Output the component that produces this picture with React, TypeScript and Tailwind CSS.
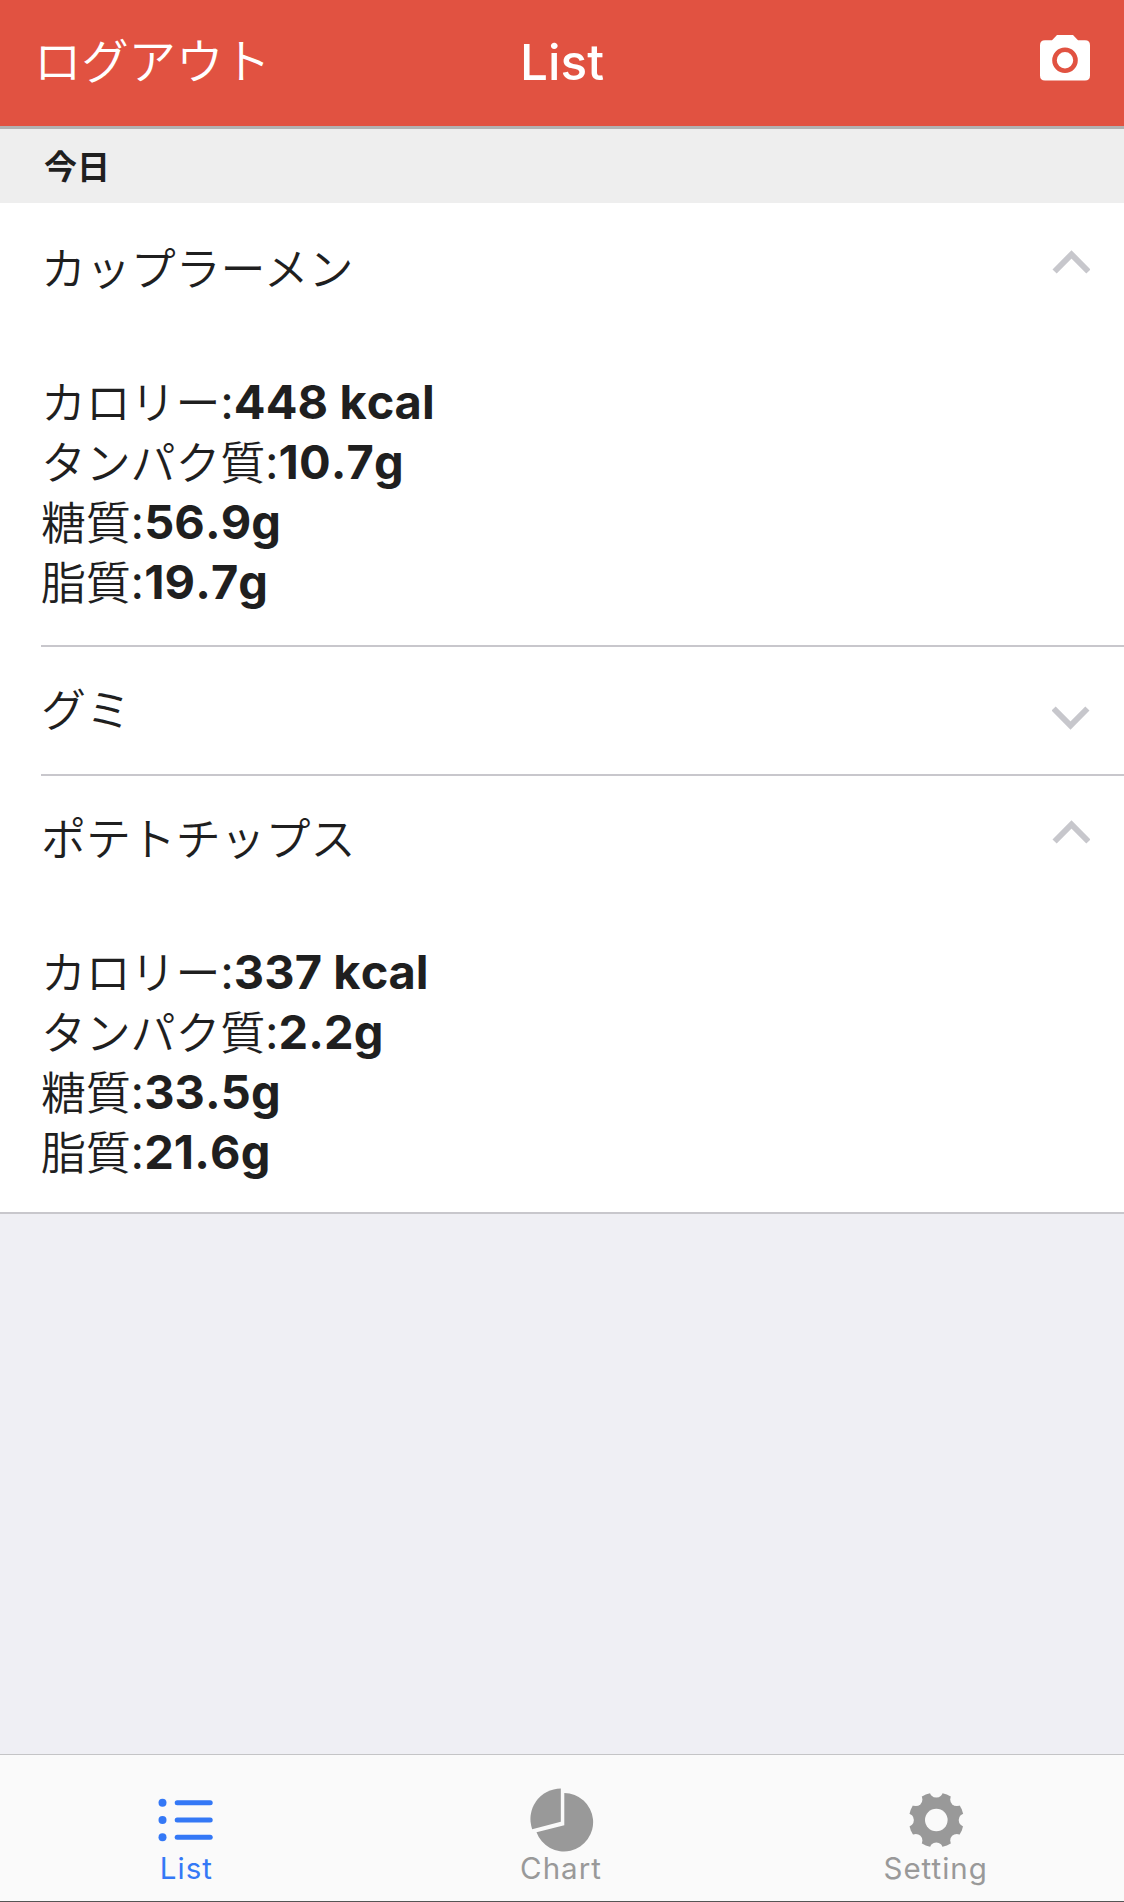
import { ReactNode } from "react"

type Food = {
  name: string
  open: boolean
  calorie?: string
  protein?: string
  sugar?: string
  fat?: string
}

const foods: Food[] = [
  {
    name: "カップラーメン",
    open: true,
    calorie: "448 kcal",
    protein: "10.7g",
    sugar: "56.9g",
    fat: "19.7g",
  },
  { name: "グミ", open: false },
  {
    name: "ポテトチップス",
    open: true,
    calorie: "337 kcal",
    protein: "2.2g",
    sugar: "33.5g",
    fat: "21.6g",
  },
]

const CameraIcon = () => (
  <svg width="50" height="46" viewBox="0 0 50 46">
    <path
      fill="#fff"
      d="M17 0H33L38 5.3H45Q50 5.3 50 10.3V40.5Q50 45.6 45 45.6H5Q0 45.6 0 40.5V10.3Q0 5.3 5 5.3H12Z"
    />
    <circle cx="25" cy="25.2" r="10.5" fill="none" stroke="#e15241" strokeWidth="4.6" />
  </svg>
)

const Chevron = ({ open }: { open: boolean }) => (
  <svg width="38" height="24" viewBox="0 0 38 24" className={open ? "" : "rotate-180"}>
    <path d="M2.6 21.5L19.5 4.4L36.4 21.5" fill="none" stroke="#c7c7cc" strokeWidth="5.9" />
  </svg>
)

const ListIcon = () => (
  <svg width="64" height="64" viewBox="0 0 64 64" fill="currentColor">
    {[14.7, 32, 49.3].map((y) => (
      <g key={y}>
        <circle cx="7.5" cy={y} r="4" />
        <rect x="19.7" y={y - 2.5} width="38" height="5" rx="2.5" />
      </g>
    ))}
  </svg>
)

const PieIcon = () => (
  <svg width="64" height="64" viewBox="0 0 64 64" fill="currentColor">
    <path d="M30.8 0.5V33.7L2.2 41.2A30.5 30.5 0 0 1 30.8 0.5Z" />
    <path d="M34.3 5A29.2 29.2 0 1 1 6.5 44.2L34.3 37.3Z" />
  </svg>
)

const GearIcon = () => (
  <svg width="64" height="64" viewBox="0.7 0 64 64" fill="currentColor">
    <mask id="gear">
      <rect width="64" height="64" fill="#fff" />
      <circle cx="32" cy="32" r="11.3" fill="#000" />
      {[0, 45, 90, 135, 180, 225, 270, 315].map((deg) => (
        <circle key={deg} cx="32" cy="3" r="6.6" fill="#000" transform={`rotate(${deg} 32 32)`} />
      ))}
    </mask>
    <circle cx="32" cy="32" r="27.6" mask="url(#gear)" />
  </svg>
)

const Nutrient = ({ label, value }: { label: string; value?: string }) => (
  <div className="flex h-[60px] items-baseline leading-[60px]">
    <span className="relative top-px text-[45px] font-[350] tracking-[-0.2px]">{label}</span>
    <span className="text-[47px]">:</span>
    <span className="text-[47px] font-bold tracking-[0.1px] [font-kerning:none]">{value}</span>
  </div>
)

const FoodItem = ({ food }: { food: Food }) => (
  <li className="border-b-2 border-[#c8c7cc] pb-[3px] first:pt-[3px] last:border-b-0 last:pb-0">
    <div className={`flex items-start justify-between pr-[34px] ${food.open ? "h-[127px]" : "h-[124px]"}`}>
      <h2 className="pt-[34px] text-[45px] leading-[60px] font-[350] tracking-[-0.1px]">{food.name}</h2>
      <div className={food.open ? "pt-[44px]" : "pt-[59px]"}>
        <Chevron open={food.open} />
      </div>
    </div>
    {food.open && (
      <div className="h-[309px] pt-[39px]">
        <Nutrient label="カロリー" value={food.calorie} />
        <Nutrient label="タンパク質" value={food.protein} />
        <Nutrient label="糖質" value={food.sugar} />
        <Nutrient label="脂質" value={food.fat} />
      </div>
    )}
  </li>
)

const Tab = ({ label, active, children }: { label: string; active?: boolean; children: ReactNode }) => (
  <button
    className={`flex flex-1 flex-col items-center pt-[33px] ${active ? "text-[#3478f6]" : "text-[#999999]"}`}
  >
    {children}
    <span className="pr-[2px] text-[29.5px] leading-[33px] font-[370] tracking-[1px]">{label}</span>
  </button>
)

const App = () => {
  return (
    <div className="flex h-[1902px] w-[1124px] flex-col bg-[#efeff4] font-['Inter','Noto_Sans_CJK_JP',sans-serif] text-[#1f1f1f]">
      <header className="grid h-[129px] grid-cols-3 items-start border-b-[3px] border-[#b2b2b2] bg-[#e15241] pr-[34px] pl-[34px] text-white">
        <button className="pt-[32px] text-left text-[47.5px] leading-[60px] font-[350] tracking-[-0.2px]">
          ログアウト
        </button>
        <h1 className="pt-[32px] text-center text-[49.5px] leading-[60px] font-medium">List</h1>
        <div className="flex justify-end pt-[35px]">
          <CameraIcon />
        </div>
      </header>
      <main className="flex-1">
        <div className="h-[74px] bg-[#eeeeee] pl-[44px] text-[33px] leading-[76px] font-bold">今日</div>
        <ul className="border-b-2 border-[#c8c7cc] bg-white pl-[41px]">
          {foods.map((food) => (
            <FoodItem key={food.name} food={food} />
          ))}
        </ul>
      </main>
      <nav className="flex h-[148px] items-start border-t border-b border-t-[#c4c4c6] border-b-[#555555] bg-[#fafafa]">
        <Tab label="List" active>
          <ListIcon />
        </Tab>
        <Tab label="Chart">
          <PieIcon />
        </Tab>
        <Tab label="Setting">
          <GearIcon />
        </Tab>
      </nav>
    </div>
  )
}

export default App
